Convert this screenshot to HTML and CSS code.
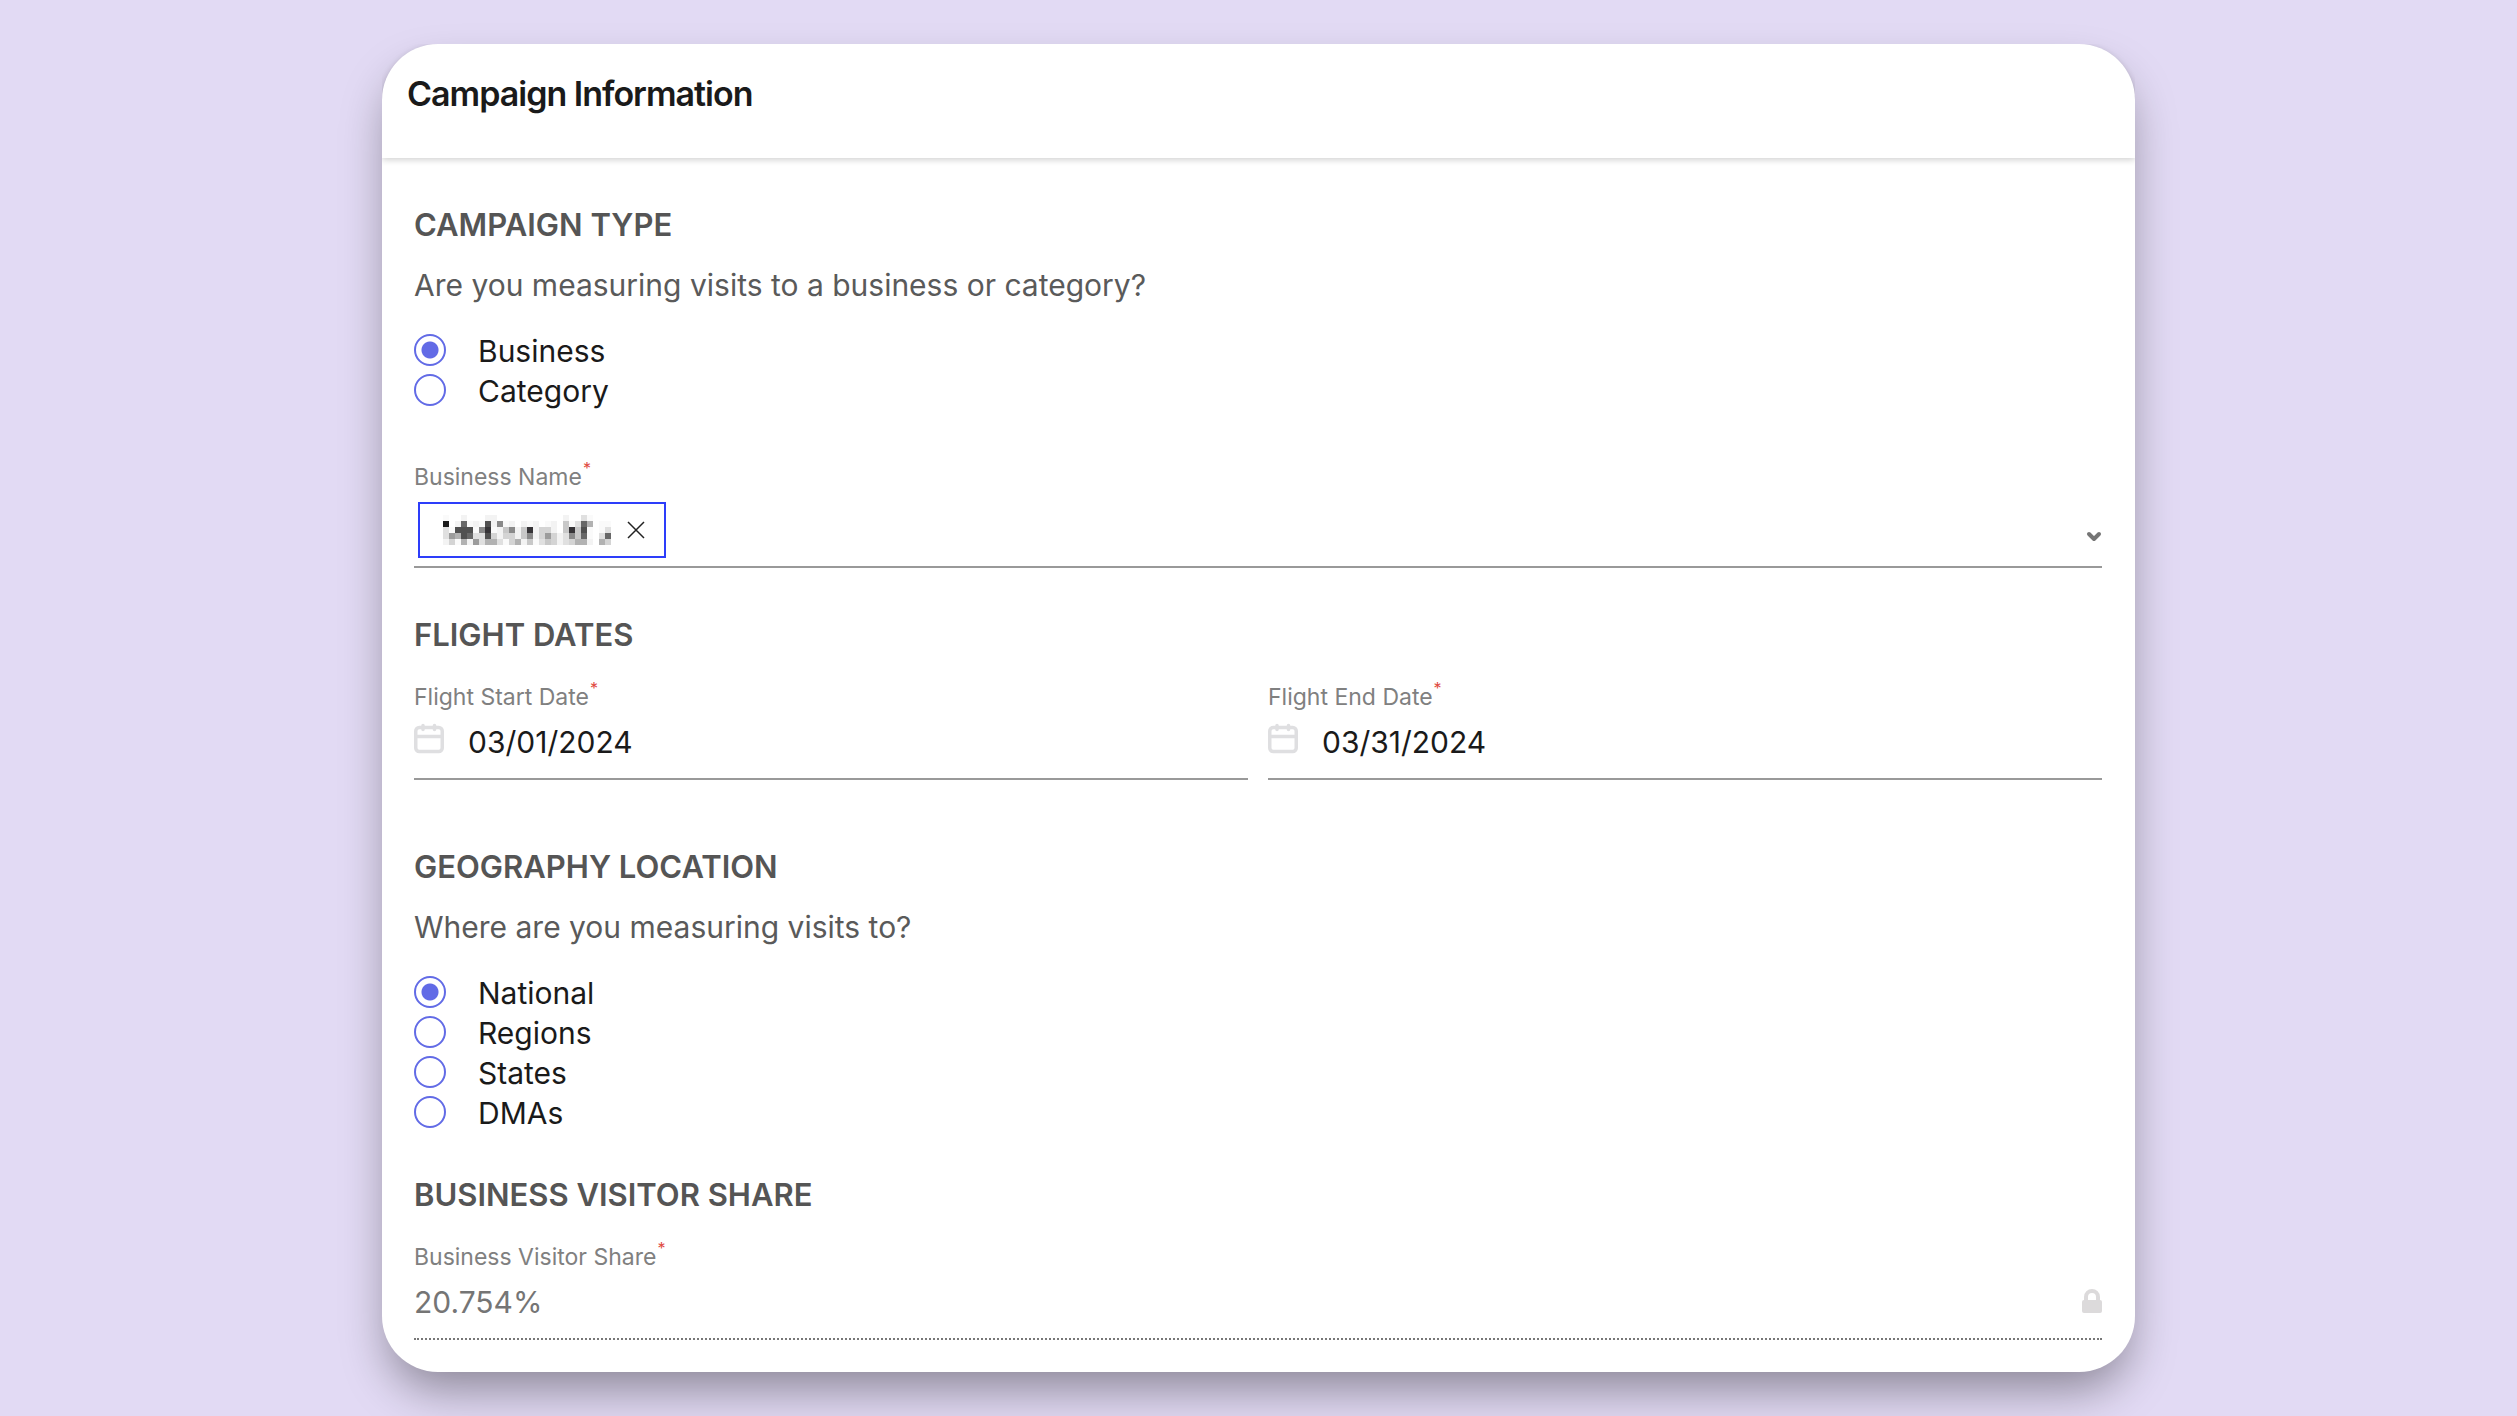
FILE: index.html
```html
<!DOCTYPE html>
<html lang="en">
<head>
<meta charset="utf-8">
<meta name="viewport" content="width=device-width, initial-scale=1">
<title>Campaign Information</title>
<link rel="stylesheet" href="styles.css">
</head>
<body>
<main class="card">
  <header class="card-header">
    <h1 class="card-title">Campaign Information</h1>
  </header>
  <form class="card-body">
    <section class="section section-type">
      <h2 class="section-title">Campaign Type</h2>
      <fieldset class="choices">
        <legend class="question">Are you measuring visits to a business or category?</legend>
        <label class="choice"><input class="radio" type="radio" name="type" checked>Business</label>
        <label class="choice"><input class="radio" type="radio" name="type">Category</label>
      </fieldset>
      <div class="field field-business">
        <label class="field-label" for="business">Business Name<span class="required">*</span></label>
        <div class="control control-chips">
          <span class="chip">
            <svg class="redacted" viewBox="0 0 28 5" shape-rendering="crispEdges" role="img" aria-label="Redacted business name">
              <path fill="#1a1a1a" d="M0 1h1v1h-1z"/>
              <path fill="#363437" d="M7 2h1v1h-1zM14 2h1v1h-1zM21 2h1v1h-1z"/>
              <path fill="#505050" d="M7 1h1v1h-1zM2 2h3v1h-3zM3 3h1v1h-1zM7 3h1v1h-1zM23 2h1v1h-1z"/>
              <path fill="#686868" d="M3 1h1v1h-1zM23 1h1v1h-1zM4 3h1v1h-1zM23 3h1v1h-1zM27 3h1v1h-1z"/>
              <path fill="#8a8a8a" d="M9 1h1v1h-1zM6 2h1v1h-1zM11 2h1v1h-1zM14 3h1v1h-1zM21 3h1v1h-1z"/>
              <path fill="#9c9c9c" d="M1 3h1v1h-1zM17 3h1v1h-1zM5 4h1v1h-1z"/>
              <path fill="#b2b2b2" d="M24 1h1v1h-1zM2 3h1v1h-1zM3 4h1v1h-1zM7 4h2v1h-2zM12 4h1v1h-1zM22 4h2v1h-2zM26 4h1v1h-1z"/>
              <path fill="#c8c8c8" d="M20 1h1v1h-1zM10 2h1v1h-1zM13 2h1v1h-1zM20 2h1v1h-1zM22 2h1v1h-1zM13 3h1v1h-1zM22 3h1v1h-1zM14 4h1v1h-1zM17 4h1v1h-1z"/>
              <path fill="#d4d4d4" d="M16 2h2v1h-2zM8 3h1v1h-1zM10 3h2v1h-2zM16 3h1v1h-1zM18 3h1v1h-1zM1 4h1v1h-1zM11 4h1v1h-1zM18 4h1v1h-1zM21 4h1v1h-1zM27 4h1v1h-1z"/>
              <path fill="#e0e0e0" d="M23 0h1v1h-1zM22 1h1v1h-1zM0 2h1v2h-1zM27 2h1v1h-1zM5 3h2v1h-2zM20 3h1v2h-1zM26 3h1v1h-1zM6 4h1v1h-1zM9 4h1v1h-1zM16 4h1v1h-1z"/>
              <path fill="#f3f3f3" d="M3 0h1v1h-1zM7 0h2v1h-2zM20 0h1v1h-1zM2 1h1v1h-1zM5 1h1v1h-1zM8 1h1v1h-1zM11 1h1v1h-1zM13 1h1v1h-1zM15 1h1v1h-1zM18 1h1v2h-1zM9 2h1v2h-1zM12 2h1v2h-1zM15 2h1v2h-1zM19 3h1v2h-1zM0 4h1v1h-1zM4 4h1v1h-1zM13 4h1v1h-1zM24 4h1v1h-1z"/>
              <path fill="#fafafa" d="M0 0h1v1h-1zM24 0h1v1h-1zM4 1h1v1h-1zM6 1h1v1h-1zM10 1h1v1h-1zM14 1h1v1h-1zM17 1h1v1h-1zM21 1h1v1h-1zM26 1h2v1h-2zM1 2h1v1h-1zM5 2h1v1h-1zM8 2h1v1h-1zM24 2h1v2h-1zM26 2h1v1h-1zM2 4h1v1h-1zM10 4h1v1h-1zM15 4h1v1h-1z"/>
            </svg>
            <button class="icon-button" type="button" aria-label="Remove">
              <svg width="18" height="18" viewBox="0 0 18 18" fill="none" stroke="#222" stroke-width="1.5"><path d="M1 1l16 16M17 1L1 17"/></svg>
            </button>
          </span>
          <button class="icon-button chevron" id="business" type="button" aria-label="Show businesses" aria-haspopup="listbox">
            <svg width="16" height="12" viewBox="1 0 16 12" fill="none" stroke="#757575" stroke-width="4" stroke-linecap="round" stroke-linejoin="round"><path d="M4 3l5 5 5-5"/></svg>
          </button>
        </div>
      </div>
    </section>

    <section class="section section-dates">
      <h2 class="section-title">Flight Dates</h2>
      <div class="columns">
        <div class="field">
          <label class="field-label" for="start">Flight Start Date<span class="required">*</span></label>
          <div class="control">
            <svg class="calendar" width="30" height="34" viewBox="0 1 30 34" fill="none" stroke="#dfdfe1" stroke-width="3.500" stroke-linecap="round"><rect x="1.750" y="6.500" width="26.500" height="24" rx="3.500"/><path d="M2 15.500h26M9 4.500v4M20.500 4.500v4"/></svg>
            <input class="input" id="start" type="text" value="03/01/2024">
          </div>
        </div>
        <div class="field">
          <label class="field-label" for="end">Flight End Date<span class="required">*</span></label>
          <div class="control">
            <svg class="calendar" width="30" height="34" viewBox="0 1 30 34" fill="none" stroke="#dfdfe1" stroke-width="3.500" stroke-linecap="round"><rect x="1.750" y="6.500" width="26.500" height="24" rx="3.500"/><path d="M2 15.500h26M9 4.500v4M20.500 4.500v4"/></svg>
            <input class="input" id="end" type="text" value="03/31/2024">
          </div>
        </div>
      </div>
    </section>

    <section class="section section-geography">
      <h2 class="section-title">Geography Location</h2>
      <fieldset class="choices">
        <legend class="question">Where are you measuring visits to?</legend>
        <label class="choice"><input class="radio" type="radio" name="geo" checked>National</label>
        <label class="choice"><input class="radio" type="radio" name="geo">Regions</label>
        <label class="choice"><input class="radio" type="radio" name="geo">States</label>
        <label class="choice"><input class="radio" type="radio" name="geo">DMAs</label>
      </fieldset>
    </section>

    <section class="section">
      <h2 class="section-title">Business Visitor Share</h2>
      <div class="field">
        <label class="field-label" for="share">Business Visitor Share<span class="required">*</span></label>
        <div class="control control-locked">
          <input class="input" id="share" type="text" value="20.754%" readonly>
          <svg class="lock" width="20" height="24" viewBox="0 0 20 24"><rect y="11" width="20" height="13" rx="2" fill="#dcdadb"/><path d="M4 12V8a6 6 0 0 1 12 0v4" fill="none" stroke="#dcdadb" stroke-width="4"/></svg>
        </div>
      </div>
    </section>
  </form>
</main>
</body>
</html>
```

FILE: styles.css
```css
* {
  box-sizing: border-box;
}

body {
  margin: 0;
  padding: 44px 382px;
  background: #e2daf4;
  color: #1a1a1a;
  font-family: Inter, "Liberation Sans", sans-serif;
  font-size: 30px;
  line-height: 40px;
}

.card {
  background: #fff;
  border-radius: 56px;
  box-shadow: 0 24px 48px -8px rgba(0, 0, 0, 0.4);
}

.card-header {
  padding: 28px 25px 42px;
  box-shadow: 0 2px 6px rgba(0, 0, 0, 0.18);
  border-radius: 56px 56px 0 0;
  clip-path: inset(0 0 -10px 0);
}

.card-title {
  margin: 0;
  font-size: 34px;
  font-weight: 600;
  line-height: 44px;
  letter-spacing: -1px;
}

.card-body {
  padding: 47px 33px 32px 32px;
}

.section-type {
  margin-bottom: 47px;
}

.section-dates {
  margin-bottom: 67px;
}

.section-geography {
  margin-bottom: 43px;
}

.section-title {
  margin: 0;
  color: #555;
  font-size: 31px;
  font-weight: 600;
  text-transform: uppercase;
}

.choices {
  margin: 20px 0 0;
  padding: 0;
  border: 0;
}

.question {
  margin-bottom: 25px;
  padding: 0;
  color: #5a5a5a;
}

.choice {
  display: flex;
  align-items: flex-start;
  gap: 32px;
  height: 40px;
  line-height: 42px;
}

.radio {
  appearance: none;
  width: 32px;
  height: 32px;
  margin: 4px 0 0;
  border: 2px solid #626be6;
  border-radius: 50%;
}

.radio:checked {
  background: radial-gradient(circle, #626be6 8px, transparent 9px);
}

.field {
  margin-top: 26px;
}

.field-business {
  margin-top: 51px;
}

.field-label {
  display: block;
  color: #808080;
  font-size: 23px;
  line-height: 32px;
}

.required {
  margin-left: 1px;
  color: #e04a3f;
  font-size: 16px;
  line-height: 0;
  vertical-align: 11px;
}

.columns {
  display: grid;
  grid-template-columns: 1fr 1fr;
  gap: 20px;
}

.control {
  display: flex;
  align-items: flex-start;
  gap: 24px;
  padding: 9px 0 16px;
  border-bottom: 2px solid #999;
}

.control-chips {
  align-items: center;
  justify-content: space-between;
  padding: 9px 0 8px 4px;
}

.control-locked {
  border-bottom: 2px dotted #777;
}

.control-locked .input {
  color: #757575;
}

.input {
  flex: 1;
  min-width: 0;
  height: 40px;
  padding: 0;
  border: 0;
  outline: 0;
  background: none;
  color: #1a1a1a;
  font: inherit;
}

.lock {
  margin-top: 7px;
}

.chip {
  display: flex;
  align-items: center;
  gap: 16px;
  height: 56px;
  padding: 0 19px 0 23px;
  border: 2px solid #2d3dfa;
}

.redacted {
  width: 168px;
  height: 30px;
}

.icon-button {
  display: flex;
  padding: 0;
  border: 0;
  background: none;
}

.chevron {
  padding-top: 14px;
}

@media (max-width: 1600px) {
  body {
    padding: 44px 24px;
  }
}
```
